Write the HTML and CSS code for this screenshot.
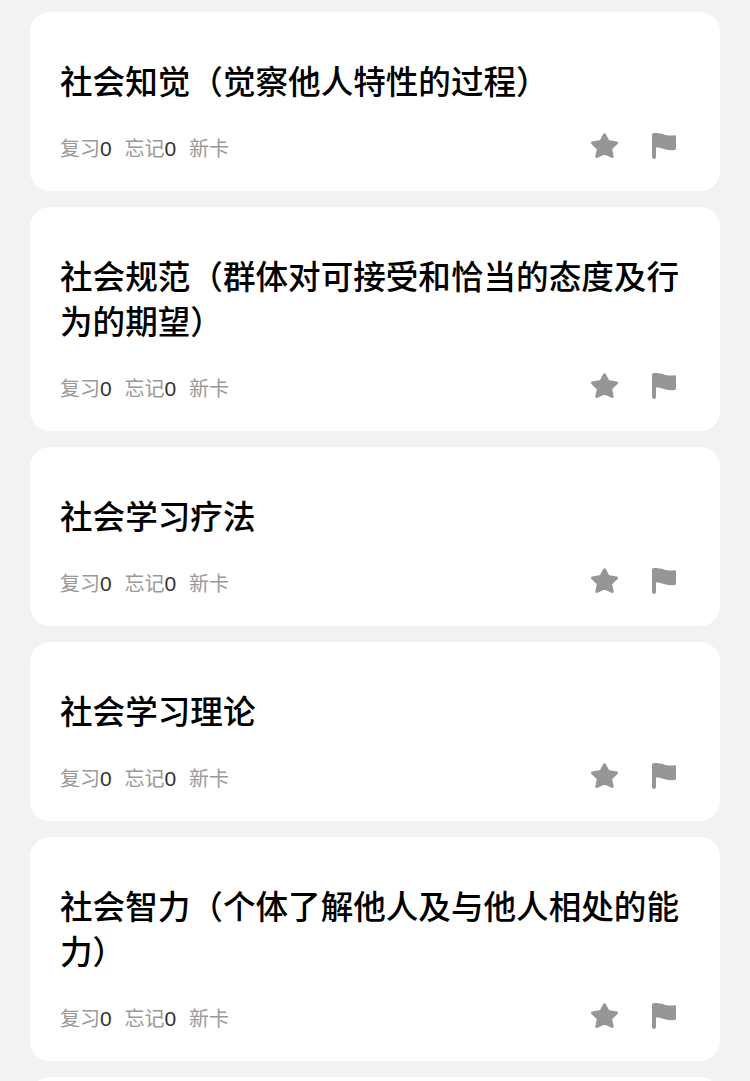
FILE: index.html
```html
<!DOCTYPE html>
<html lang="zh-CN">
<head>
    <meta charset="UTF-8">
    <meta name="viewport" content="width=device-width, initial-scale=1.0">
    <title>卡片列表</title>
    <link rel="stylesheet" href="styles.css">
</head>
<body>
    <svg class="icon-defs" width="0" height="0">
        <symbol id="icon-star" viewBox="0 0 27 25">
            <path d="M13.500 1.800L17.200 8.600L25.500 9.900L19.600 15.800L21.200 23.500L13.500 19.900L5.800 23.500L7.400 15.800L1.500 9.900L9.800 8.600Z"/>
        </symbol>
        <symbol id="icon-flag" viewBox="0 0 24 26">
            <path d="M2 0C6 0 10 .5 12 1.500C15 2.800 19 2.800 22.500 2.200Q24 2 24 3.500V15.500Q24 17 22.500 17C18 17.500 14 17 11 15.800C9 15 6.500 14.500 4 14.500V24Q4 26 2 26Q0 26 0 24V2Q0 0 2 0Z"/>
        </symbol>
    </svg>

    <div class="card-list">
        <div class="card">
            <h2 class="card-title">社会知觉（觉察他人特性的过程）</h2>
            <div class="card-footer">
                <div class="stats">
                    <span>复习<b>0</b></span>
                    <span>忘记<b>0</b></span>
                    <span>新卡</span>
                </div>
                <div class="actions">
                    <svg class="star"><use href="#icon-star"/></svg>
                    <svg class="flag"><use href="#icon-flag"/></svg>
                </div>
            </div>
        </div>

        <div class="card">
            <h2 class="card-title">社会规范（群体对可接受和恰当的态度及行为的期望）</h2>
            <div class="card-footer">
                <div class="stats">
                    <span>复习<b>0</b></span>
                    <span>忘记<b>0</b></span>
                    <span>新卡</span>
                </div>
                <div class="actions">
                    <svg class="star"><use href="#icon-star"/></svg>
                    <svg class="flag"><use href="#icon-flag"/></svg>
                </div>
            </div>
        </div>

        <div class="card">
            <h2 class="card-title">社会学习疗法</h2>
            <div class="card-footer">
                <div class="stats">
                    <span>复习<b>0</b></span>
                    <span>忘记<b>0</b></span>
                    <span>新卡</span>
                </div>
                <div class="actions">
                    <svg class="star"><use href="#icon-star"/></svg>
                    <svg class="flag"><use href="#icon-flag"/></svg>
                </div>
            </div>
        </div>

        <div class="card">
            <h2 class="card-title">社会学习理论</h2>
            <div class="card-footer">
                <div class="stats">
                    <span>复习<b>0</b></span>
                    <span>忘记<b>0</b></span>
                    <span>新卡</span>
                </div>
                <div class="actions">
                    <svg class="star"><use href="#icon-star"/></svg>
                    <svg class="flag"><use href="#icon-flag"/></svg>
                </div>
            </div>
        </div>

        <div class="card">
            <h2 class="card-title">社会智力（个体了解他人及与他人相处的能力）</h2>
            <div class="card-footer">
                <div class="stats">
                    <span>复习<b>0</b></span>
                    <span>忘记<b>0</b></span>
                    <span>新卡</span>
                </div>
                <div class="actions">
                    <svg class="star"><use href="#icon-star"/></svg>
                    <svg class="flag"><use href="#icon-flag"/></svg>
                </div>
            </div>
        </div>

        <div class="card card-next"></div>
    </div>
</body>
</html>
```

FILE: styles.css
```css
body {
    font-family: "Liberation Sans", "Noto Sans CJK SC", sans-serif;
    background: #f2f2f2;
    margin: 0;
    height: 1081px;
    overflow: hidden;
}

.icon-defs {
    display: block;
}

.card-list {
    display: flex;
    flex-direction: column;
    gap: 16px;
    height: 1081px;
    padding: 12px 30px 0;
    box-sizing: border-box;
    overflow: hidden;
}

.card {
    background: #ffffff;
    border-radius: 20px;
    padding: 45px 30px 30px;
    flex-shrink: 0;
}

.card-next {
    height: 40px;
}

.card-title {
    font-family: "Noto Sans CJK SC", sans-serif;
    font-size: 32.6px;
    font-weight: 500;
    line-height: 45px;
    color: #000000;
    margin: 0;
}

.card-footer {
    display: flex;
    justify-content: space-between;
    align-items: center;
    height: 28px;
    margin-top: 31px;
}

.stats {
    display: flex;
    gap: 12px;
    font-size: 20px;
    color: #999999;
}

.stats b {
    font-size: 21px;
    font-weight: 400;
    letter-spacing: 0.8px;
    color: #333333;
}

.actions {
    display: flex;
    align-items: center;
    gap: 34px;
    margin-bottom: 3px;
    padding-right: 14px;
    fill: #969696;
}

.star {
    width: 27px;
    height: 25px;
    stroke: #969696;
    stroke-width: 3px;
    stroke-linejoin: round;
}

.flag {
    width: 24px;
    height: 26px;
}
```
